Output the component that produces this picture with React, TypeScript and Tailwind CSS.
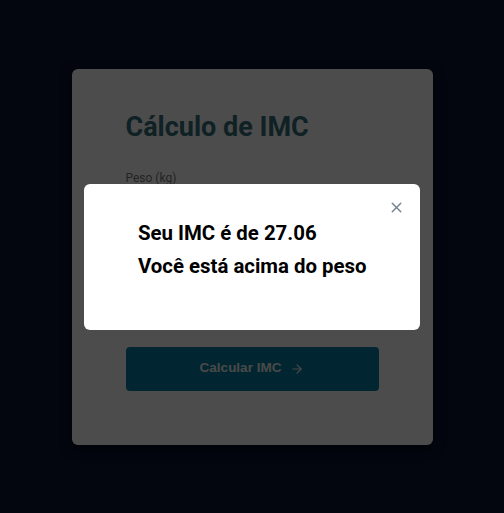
import { ArrowRight, X } from "lucide-react";

export default function App() {
  return (
    <div className="relative flex h-[513px] w-full items-center justify-center bg-[#0a1432] font-['Roboto',sans-serif]">
      {/* Form card */}
      <div className="flex w-[361px] h-[376px] flex-col rounded-md bg-white px-[54px] pt-[42px] shadow-[0_4px_12px_rgba(0,0,0,0.5)]">
        <h1 className="text-[27px] font-bold leading-[32px] text-[#33707a]">Cálculo de IMC</h1>

        <label className="mt-[27px] text-[12px] leading-[16px] text-[#7a7a7a]">Peso (kg)</label>
        <input className="mt-1 h-[40px] rounded border border-gray-300 px-3" defaultValue="" />
        <input className="mt-[36px] h-[40px] rounded border border-gray-300 px-3" defaultValue="" />

        <button className="mt-[41px] flex h-[44px] w-full items-center justify-center gap-[9px] rounded bg-[#077fa3] font-['Liberation_Sans',Arial,sans-serif] text-[13.5px] font-bold text-[#f0f4f5]">
          Calcular IMC
          <ArrowRight size={14} strokeWidth={2} />
        </button>
      </div>

      {/* Overlay */}
      <div className="absolute inset-0 bg-black/[0.7]" />

      {/* Result modal */}
      <div className="absolute left-[84px] top-[184px] h-[146px] w-[336px] rounded-md bg-white pl-[54px] pt-[35px]">
        <button className="absolute right-[15px] top-[15px] text-[#728290]">
          <X size={17} strokeWidth={2} />
        </button>
        <p className="text-[20.4px] font-bold leading-[28px] text-black">Seu IMC é de 27.06</p>
        <p className="mt-[5px] text-[20.4px] font-bold leading-[28px] text-black">Você está acima do peso</p>
      </div>
    </div>
  );
}
